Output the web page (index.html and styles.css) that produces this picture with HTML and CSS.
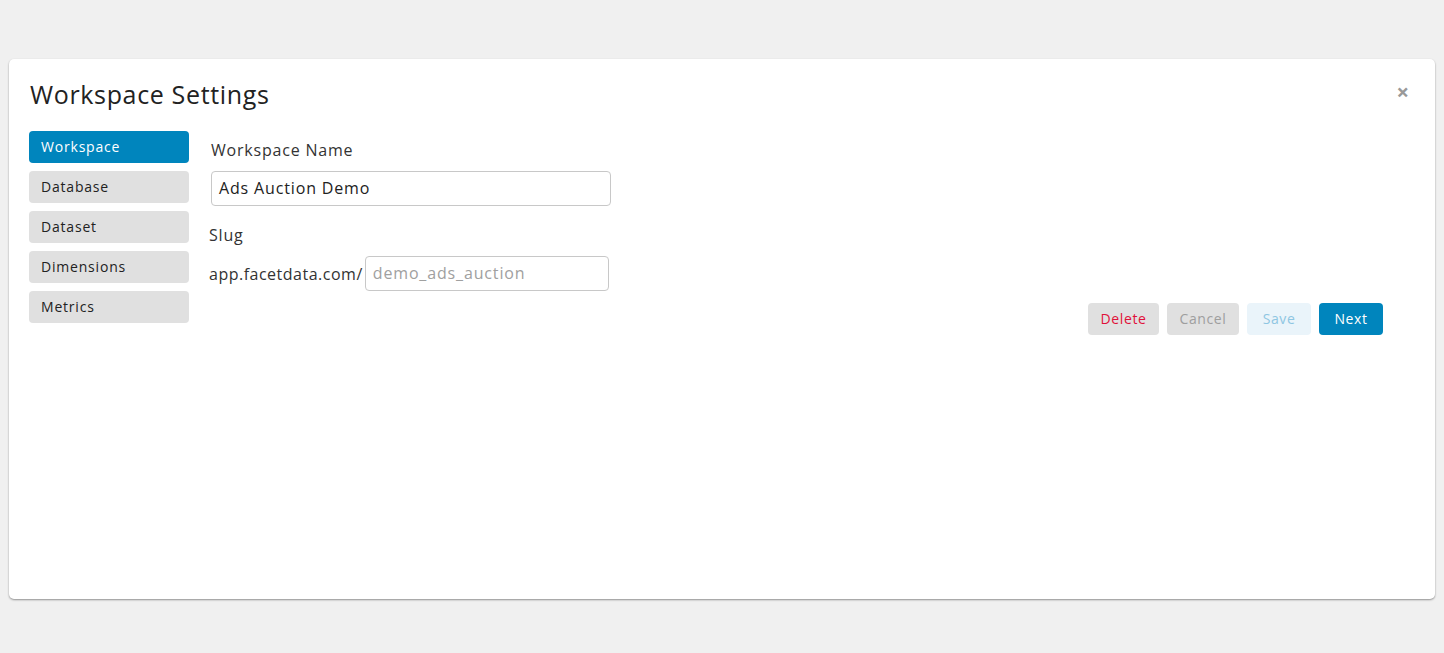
FILE: index.html
```html
<!DOCTYPE html>
<html>
<head>
<meta charset="utf-8">
<link rel="stylesheet" href="styles.css">
</head>
<body>
<div class="modal">
  <div class="modal-header">
    <h1 class="title">Workspace Settings</h1>
    <span class="close">&times;</span>
  </div>
  <div class="modal-body">
    <nav class="sidebar">
      <div class="tab active">Workspace</div>
      <div class="tab">Database</div>
      <div class="tab">Dataset</div>
      <div class="tab">Dimensions</div>
      <div class="tab">Metrics</div>
    </nav>
    <div class="content">
      <div class="group group-name">
        <label class="label">Workspace Name</label>
        <div class="input input-name">Ads Auction Demo</div>
      </div>
      <div class="group">
        <label class="label">Slug</label>
        <div class="slug-row">
          <span class="prefix">app.facetdata.com/</span>
          <div class="input input-slug placeholder">demo_ads_auction</div>
        </div>
      </div>
      <div class="actions">
        <button class="btn btn-delete">Delete</button>
        <button class="btn btn-cancel">Cancel</button>
        <button class="btn btn-save">Save</button>
        <button class="btn btn-next">Next</button>
      </div>
    </div>
  </div>
</div>
</body>
</html>
```

FILE: styles.css
```css
* { box-sizing: border-box; }
html, body { margin: 0; padding: 0; }
body {
  background: #f0f0f0;
  font-family: "Open Sans", "Noto Sans", sans-serif;
  color: #333;
  padding: 59px 9px 0 9px;
  height: 653px;
}
.modal {
  background: #fff;
  border-radius: 5px;
  box-shadow: 0 1px 2px rgba(0,0,0,0.4);
  height: 540px;
}
.modal-header {
  display: flex;
  justify-content: space-between;
  align-items: flex-start;
  padding: 19px 26px 0 21px;
}
.title {
  margin: 0;
  font-weight: 400;
  font-size: 25px;
  line-height: 32px;
  color: #222;
  letter-spacing: 0.65px;
}
.close {
  font-size: 22px;
  line-height: 22px;
  font-weight: 700;
  color: #999;
  margin-top: 2px;
}
.modal-body {
  display: flex;
  padding: 21px 52px 0 20px;
  gap: 20px;
}
.sidebar {
  display: flex;
  flex-direction: column;
  gap: 8px;
  width: 160px;
  flex: none;
}
.tab {
  height: 32px;
  line-height: 32px;
  padding-left: 12px;
  background: #e0e0e0;
  border-radius: 4px;
  font-size: 14px;
  color: #222;
  letter-spacing: 0.8px;
}
.tab.active {
  background: #0085bd;
  color: #fff;
}
.content {
  flex: 1;
  display: flex;
  flex-direction: column;
}
.group-name { padding-left: 2px; }
.label {
  display: block;
  font-size: 16px;
  line-height: 20px;
  margin-top: 9px;
  margin-bottom: 11px;
  color: #333;
  letter-spacing: 0.8px;
}
.group + .group .label { margin-top: 19px; }
.input {
  height: 35px;
  border: 1px solid #c8c8c8;
  border-radius: 4px;
  padding: 0 7px;
  font-size: 16px;
  line-height: 33px;
  color: #222;
  letter-spacing: 0.85px;
}
.input-name { width: 400px; }
.slug-row {
  display: flex;
  align-items: center;
  gap: 2px;
}
.prefix {
  font-size: 16px;
  color: #333;
  letter-spacing: 0.5px;
}
.input-slug { width: 244px; }
.placeholder { color: #a0a0a0; }
.actions {
  display: flex;
  justify-content: flex-end;
  gap: 8px;
  margin-top: 12px;
}
.btn {
  height: 32px;
  border: none;
  border-radius: 4px;
  font-family: inherit;
  font-size: 14px;
  padding: 0 12px 2px;
  letter-spacing: 0.6px;
}
.btn-delete { background: #e0e0e0; color: #e0103a; width: 71px; }
.btn-cancel { background: #e0e0e0; color: #9e9e9e; width: 72px; }
.btn-save { background: #eaf4fa; color: #8ec6e2; width: 64px; }
.btn-next { background: #0085bd; color: #fff; width: 64px; }
```
